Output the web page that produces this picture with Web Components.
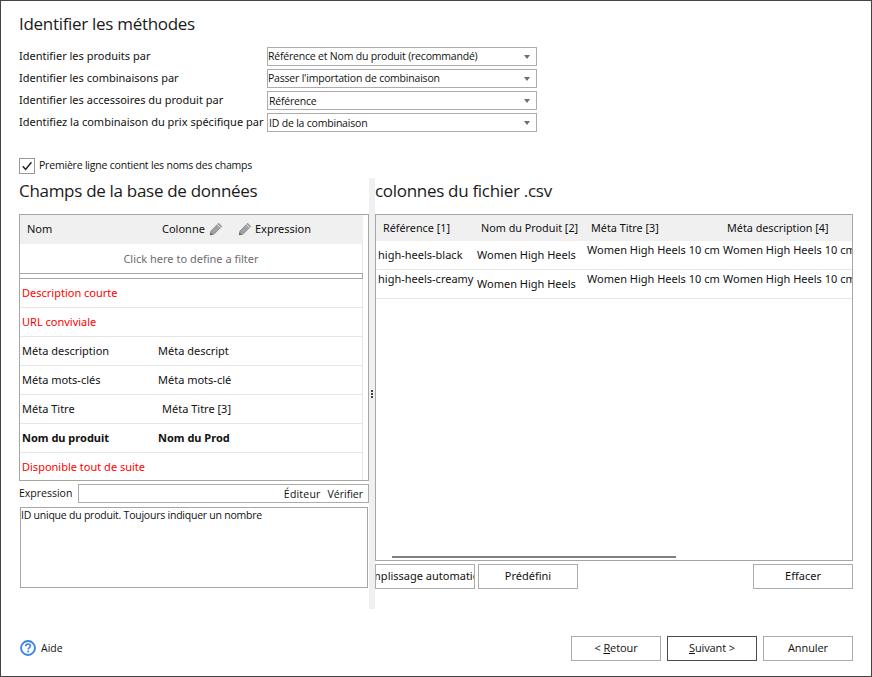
<!DOCTYPE html>
<html lang="fr"><head><meta charset="utf-8"><title>Identifier les méthodes</title>
<style>
html,body{margin:0;padding:0;background:#fff}
body{font:11px "Noto Sans","DejaVu Sans",sans-serif;color:#111}
</style></head><body>
<wizard-window>
  <section-title>Identifier les méthodes</section-title>
  <form-row label="Identifier les produits par" value="Référence et Nom du produit (recommandé)"></form-row>
  <form-row label="Identifier les combinaisons par" value="Passer l'importation de combinaison"></form-row>
  <form-row label="Identifier les accessoires du produit par" value="Référence" inset></form-row>
  <form-row label="Identifiez la combinaison du prix spécifique par" value="ID de la combinaison" inset></form-row>
  <check-box>Première ligne contient les noms des champs</check-box>
  <split-panes>
    <div slot="left">
      <section-title small>Champs de la base de données</section-title>
      <field-grid></field-grid>
      <expression-bar></expression-bar>
      <help-text>ID unique du produit. Toujours indiquer un nombre</help-text>
    </div>
    <div slot="right">
      <section-title small>colonnes du fichier .csv</section-title>
      <csv-grid></csv-grid>
      <button-row></button-row>
    </div>
  </split-panes>
  <wizard-footer></wizard-footer>
</wizard-window>
<script>
const SEGOE='"Open Sans","Noto Sans",sans-serif';
function def(name,html,init){
  customElements.define(name,class extends HTMLElement{
    constructor(){super();this.attachShadow({mode:'open'}).innerHTML=html}
    connectedCallback(){if(init)init.call(this,this.shadowRoot)}
  });
}
const PENCIL=`<svg width="14" height="14" viewBox="0 0 14 14"><path d="M9.6 1.2 12.800 4.400 5 12.200 1.200 12.900 1.900 9z" fill="#a2a2a2" stroke="#777" stroke-width=".6"/><path d="M8.300 2.500 11.500 5.700" stroke="#ececec" stroke-width=".9"/><path d="M1.200 12.900 1.600 10.600 3.500 12.500z" fill="#555"/></svg>`;

def('wizard-window',`<style>
:host{display:block;box-sizing:border-box;width:872px;height:677px;border:1px solid #444;padding:0 18px;background:#fff;overflow:hidden}
</style><slot></slot>`);

def('section-title',`<style>
:host{display:flex;align-items:center;box-sizing:border-box;height:46px;padding-bottom:2px;font:17px ${SEGOE};color:#1a1a1a;letter-spacing:-.3px;white-space:nowrap}
:host([small]){height:36px;padding-bottom:0;align-items:flex-start;line-height:26px}
</style><slot></slot>`);

def('combo-box',`<style>
:host{display:flex;align-items:center;box-sizing:border-box;width:270px;height:19px;border:1px solid #acacac;background:#fff;font:10.5px ${SEGOE};color:#111;letter-spacing:-.2px;padding-right:6px;white-space:nowrap}
span{flex:1;padding-bottom:2px}
:host([inset]) span{padding-left:1px;padding-bottom:0}
i{width:0;height:0;border:3.5px solid transparent;border-top:4px solid #6d6d6d;border-bottom:0}
</style><span><slot></slot></span><i></i>`);

def('form-row',`<style>
:host{display:grid;grid-template-columns:248px 270px;align-items:center;height:19px;margin-bottom:3px;white-space:nowrap}
#l{padding-bottom:2px}
</style><span id="l"></span><combo-box id="c"></combo-box>`,function(s){
  s.getElementById('l').textContent=this.getAttribute('label');
  const c=s.getElementById('c');c.textContent=this.getAttribute('value');
  if(this.hasAttribute('inset'))c.setAttribute('inset','');
});

def('check-box',`<style>
:host{display:flex;align-items:center;gap:4px;height:16px;margin-top:26px;font:10.5px ${SEGOE};letter-spacing:-.2px;white-space:nowrap}
b{display:flex;align-items:center;justify-content:center;box-sizing:border-box;width:16px;height:16px;border:1px solid #999}
span{padding-bottom:2px}
</style><b><svg width="12" height="12" viewBox="0 0 12 12"><path d="M1.800 6.200 4.600 9.400 10.400 2.200" fill="none" stroke="#222" stroke-width="1.500"/></svg></b><span><slot></slot></span>`);

def('split-panes',`<style>
:host{display:grid;grid-template-columns:350px 6px 478px;margin-top:4px;height:431px}
.g{background:#f0f0f0;display:flex;flex-direction:column;align-items:center;justify-content:center;gap:1px}
.g i{width:2px;height:2px;background:#444}
</style><div><slot name="left"></slot></div><div class="g"><i></i><i></i><i></i></div><div><slot name="right"></slot></div>`);

def('field-grid',`<style>
:host{display:block;box-sizing:border-box;height:267px;border:1px solid #a6a6a6;overflow:hidden}
.w{width:342px;border-right:1px solid #e6e6e6;height:100%}
.h{display:grid;grid-template-columns:142px 76px 1fr;align-items:center;box-sizing:border-box;height:29px;padding-bottom:2px;background:#f0f0f0;margin-right:-1px;white-space:nowrap}
.h span{display:flex;align-items:center;gap:4px}
.h span:last-child{gap:3px}
.h .a{padding-left:7px}
.f{display:flex;align-items:center;justify-content:center;height:29px;color:#6d6d6d}
.s{box-sizing:border-box;height:6px;border:1px solid #a6a6a6;border-left:0;width:343px}
.r{display:grid;grid-template-columns:136px 1fr;align-items:center;box-sizing:border-box;height:29px;padding:0 0 2px 2px;border-bottom:1px solid #e6e6e6;white-space:nowrap}
.red{color:#f00}.bold{font-weight:700}
.in{padding-left:4px}
</style><div class="w"><div class="h"><span class="a">Nom</span><span>Colonne ${PENCIL}</span><span>${PENCIL} Expression</span></div>
<div class="f">Click here to define a filter</div><div class="s"></div><div id="b"></div></div>`,function(s){
  const rows=[['Description courte','', 'red'],['URL conviviale','', 'red'],['Méta description','Méta descript',''],['Méta mots-clés','Méta mots-clé',''],['Méta Titre','Méta Titre [3]','t'],['Nom du produit','Nom du Prod','bold'],['Disponible tout de suite','', 'red']];
  s.getElementById('b').innerHTML=rows.map(r=>`<div class="r ${r[2]}"><span>${r[0]}</span><span class="${r[2]=='t'?'in':''}">${r[1]}</span></div>`).join('');
});

def('push-button',`<style>
:host{display:flex;align-items:center;justify-content:center;box-sizing:border-box;width:100px;height:25px;padding-bottom:2px;border:1px solid #acacac;background:#fff;white-space:nowrap;overflow:hidden;color:#111}
:host([w90]){width:90px;font:11px ${SEGOE};letter-spacing:-.1px}
:host([def]){border-color:#4a4a55}
span{flex:none}
</style><span><slot></slot></span>`);

def('expression-bar',`<style>
:host{display:grid;grid-template-columns:59px 1fr;align-items:center;height:19px;margin-top:3px;white-space:nowrap;font:10.5px ${SEGOE}}
div{box-sizing:border-box;height:19px;border:1px solid #acacac;display:flex;align-items:center;justify-content:flex-end;gap:7px;padding-right:5px}
#x{padding-bottom:1px}
#e{letter-spacing:.2px}
</style><span id="x">Expression</span><div><span id="e">Éditeur</span><span>Vérifier</span></div>`);

def('help-text',`<style>
:host{display:block;box-sizing:border-box;width:348px;height:81px;margin:4px 0 0 1px;border:1px solid #a6a6a6;font:10.5px/15px ${SEGOE};letter-spacing:-.23px;padding:0}
</style><slot></slot>`);

def('csv-grid',`<style>
:host{display:block;box-sizing:border-box;height:347px;border:1px solid #a6a6a6;overflow:hidden;position:relative}
.h,.r{display:grid;grid-template-columns:99px 110px 136px 140px;width:490px;white-space:nowrap}
.h{box-sizing:border-box;height:26px;padding-bottom:2px;background:#f0f0f0;align-items:center;font-size:10.8px}
.h span{padding-left:6px}
.h span:first-child{padding-left:7px}
.r{box-sizing:border-box;height:29px;border-bottom:1px solid #e6e6e6}
.r span{padding-left:2px;overflow:hidden;line-height:15px}
.sb{position:absolute;left:16px;bottom:2px;width:284px;height:2px;background:#808080}
</style><div class="h"><span>Référence [1]</span><span>Nom du Produit [2]</span><span>Méta Titre [3]</span><span>Méta description [4]</span></div>
<div class="r"><span style="padding-top:6px">high-heels-black</span><span style="padding-top:6px">Women High Heels</span><span style="padding-top:1px">Women High Heels 10 cm</span><span style="padding-top:1px">Women High Heels 10 cm</span></div>
<div class="r"><span style="padding-top:1px">high-heels-creamy</span><span style="padding-top:6px">Women High Heels</span><span style="padding-top:1px">Women High Heels 10 cm</span><span style="padding-top:1px">Women High Heels 10 cm</span></div>
<div class="sb"></div>`);

def('button-row',`<style>
:host{display:flex;gap:3px;margin-top:3px}
.sp{flex:1}
</style><push-button>Remplissage automatique</push-button><push-button>Prédéfini</push-button><div class="sp"></div><push-button>Effacer</push-button>`);

def('wizard-footer',`<style>
:host{display:flex;align-items:center;height:25px;margin-top:27px;gap:6px}
a{display:flex;align-items:center;gap:5px;margin-left:1px;margin-right:auto;color:#111;font:10.5px ${SEGOE};padding-bottom:1px}
u{text-decoration:underline}
</style><a><svg width="16" height="16" viewBox="0 0 16 16"><circle cx="8" cy="8" r="7" fill="none" stroke="#3a82e6" stroke-width="1.800"/><path d="M5.700 6.300C5.800 4.800 6.800 4 8.100 4 9.500 4 10.400 4.900 10.400 6 10.400 7.500 8.100 7.600 8.100 9.500" fill="none" stroke="#3a82e6" stroke-width="1.600"/><circle cx="8.100" cy="11.600" r="1" fill="#3a82e6"/></svg>Aide</a>
<push-button w90>&lt; <u>R</u>etour</push-button><push-button w90 def><u>S</u>uivant &gt;</push-button><push-button w90>Annuler</push-button>`);
</script></body></html>
